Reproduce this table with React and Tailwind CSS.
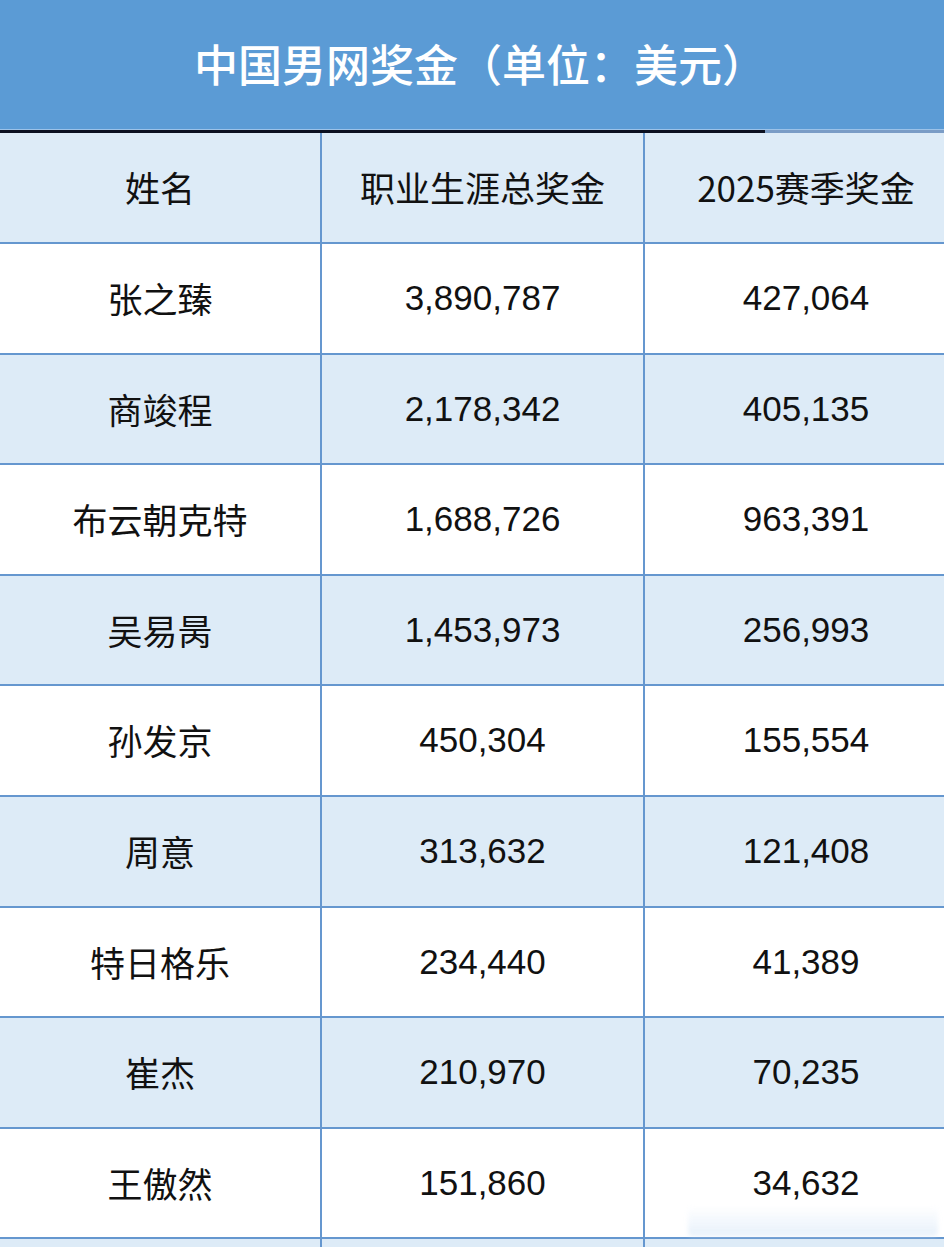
import React from 'react';

const rows = [
  ['张之臻', '3,890,787', '427,064'],
  ['商竣程', '2,178,342', '405,135'],
  ['布云朝克特', '1,688,726', '963,391'],
  ['吴易昺', '1,453,973', '256,993'],
  ['孙发京', '450,304', '155,554'],
  ['周意', '313,632', '121,408'],
  ['特日格乐', '234,440', '41,389'],
  ['崔杰', '210,970', '70,235'],
  ['王傲然', '151,860', '34,632'],
  ['', '', ''],
];

const cjk = "font-['Noto_Sans_CJK_SC',sans-serif]";
const num = "font-['Liberation_Sans',Arial,sans-serif]";

function Row({ cells, shaded, header, height }) {
  return (
    <div
      className={`grid grid-cols-[322px_323px_322px] border-b-2 border-[#6597cf] ${shaded ? 'bg-[#ddebf7]' : 'bg-white'} ${height}`}
    >
      {cells.map((c, i) => (
        <div
          key={i}
          className={`flex items-center justify-center text-[35px] text-[#111] ${i < 2 ? 'border-r-2 border-[#6597cf]' : ''} ${header || i === 0 ? cjk : num}`}
        >
          {c}
        </div>
      ))}
    </div>
  );
}

export default function App() {
  return (
    <div className="relative w-[944px] h-[1247px] overflow-hidden bg-white">
      <div className={`h-[129px] bg-[#5b9bd5] flex items-center justify-center text-white text-[44px] font-medium pb-[4px] pl-[16px] ${cjk}`}>
        中国男网奖金（单位：美元）
      </div>
      <div className="h-[1px] bg-[#9cc2e8]" />
      <div className="flex h-[3px]">
        <div className="w-[765px] bg-[#0b1020]" />
        <div className="flex-1 bg-[#7a9cc6]" />
      </div>
      <Row cells={['姓名', '职业生涯总奖金', '2025赛季奖金']} shaded header height="h-[111px]" />
      {rows.map((r, i) => (
        <Row key={i} cells={r} shaded={i % 2 === 1} height="h-[110.6px]" />
      ))}
      <div className="absolute left-[688px] top-[1206px] w-[250px] h-[30px] rounded-sm bg-gradient-to-b from-white/40 to-[#d8e8f8]/60 blur-[2px]" />
    </div>
  );
}
